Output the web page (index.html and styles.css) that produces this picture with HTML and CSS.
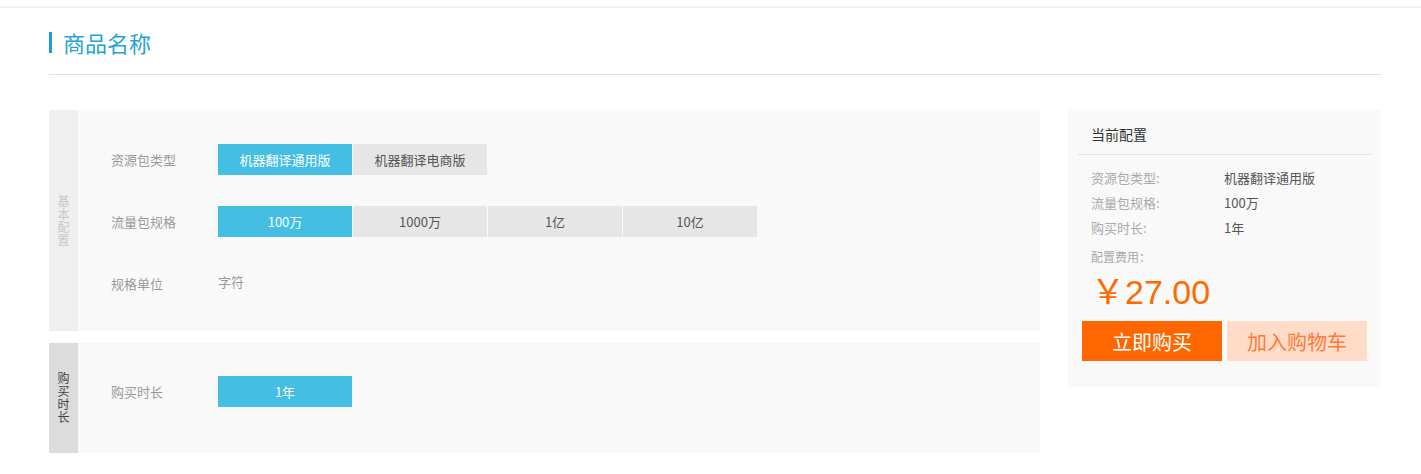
FILE: index.html
```html
<!DOCTYPE html>
<html lang="zh-CN">
<head>
    <meta charset="UTF-8">
    <title>商品名称</title>
    <link rel="stylesheet" href="styles.css">
</head>
<body>
  <div class="topbar"></div>

  <div class="page">
    <div class="title"><span class="title-bar"></span>商品名称</div>

    <div class="content">
      <div class="left">

        <div class="panel">
          <div class="side">基本配置</div>
          <div class="panel-body">
            <div class="row">
              <span class="row-label">资源包类型</span>
              <div class="opts">
                <span class="opt active">机器翻译通用版</span>
                <span class="opt">机器翻译电商版</span>
              </div>
            </div>
            <div class="row">
              <span class="row-label">流量包规格</span>
              <div class="opts">
                <span class="opt active">100万</span>
                <span class="opt">1000万</span>
                <span class="opt">1亿</span>
                <span class="opt">10亿</span>
              </div>
            </div>
            <div class="row">
              <span class="row-label">规格单位</span>
              <span class="row-text">字符</span>
            </div>
          </div>
        </div>

        <div class="panel panel-buy">
          <div class="side side-dark">购买时长</div>
          <div class="panel-body">
            <div class="row">
              <span class="row-label">购买时长</span>
              <div class="opts">
                <span class="opt active">1年</span>
              </div>
            </div>
          </div>
        </div>

      </div>

      <div class="summary">
        <div class="summary-title">当前配置</div>
        <div class="summary-list">
          <div class="summary-row"><span class="s-label">资源包类型:</span><span class="s-value">机器翻译通用版</span></div>
          <div class="summary-row"><span class="s-label">流量包规格:</span><span class="s-value">100万</span></div>
          <div class="summary-row"><span class="s-label">购买时长:</span><span class="s-value">1年</span></div>
        </div>
        <div class="fee-label">配置费用：</div>
        <div class="price">￥27.00</div>
        <div class="actions">
          <button class="btn-buy">立即购买</button>
          <button class="btn-cart">加入购物车</button>
        </div>
      </div>
    </div>
  </div>
</body>
</html>
```

FILE: styles.css
```css
body{
  margin: 0;
  font-family: "Noto Sans CJK SC", "Liberation Sans", sans-serif;
  background: #fff;
  color: #555;
}

.topbar{
  height: 6px;
  border-bottom: 2px solid #f1f1f1;
}

.page{
  padding: 0 40px 0 49px;
}

/* header */
.title{
  display: flex;
  align-items: center;
  height: 67px;
  padding-top: 2px;
  box-sizing: border-box;
  border-bottom: 1px solid #e3e3e3;
  font-size: 22px;
  color: #23a3d4;
}

.title-bar{
  width: 3px;
  height: 21px;
  background: #1a9fd0;
  margin-right: 11px;
}

.content{
  display: flex;
  align-items: flex-start;
  gap: 28px;
  margin-top: 35px;
}

.left{
  flex: 1;
  display: flex;
  flex-direction: column;
  gap: 12px;
}

/* option panels */
.panel{
  display: flex;
  background: #f9f9f9;
}

.side{
  width: 29px;
  flex: none;
  background: #efefef;
  color: #c8c8c8;
  font-size: 12px;
  writing-mode: vertical-rl;
  text-align: center;
  line-height: 29px;
  letter-spacing: 1px;
}

.side-dark{
  background: #dcdcdc;
  color: #444;
}

.panel-body{
  flex: 1;
  padding: 34px 0 33px 33px;
  display: flex;
  flex-direction: column;
  gap: 32px;
}

.panel-buy .panel-body{
  padding: 33px 0 47px 33px;
}

.row{
  display: flex;
  align-items: center;
  height: 30px;
  font-size: 13px;
}

.row-label{
  width: 107px;
  color: #999;
}

.row-text{
  color: #999;
  margin-top: -3px;
}

.opts{
  display: flex;
  gap: 1px;
}

.opt{
  width: 134px;
  height: 31px;
  line-height: 31px;
  text-align: center;
  background: #e6e6e6;
  color: #555;
}

.opt.active{
  background: #44bfe3;
  color: #fff;
}

/* right summary */
.summary{
  width: 313px;
  flex: none;
  background: #f9f9f9;
  padding: 12px 10px 26px;
  box-sizing: border-box;
}

.summary-title{
  font-size: 14px;
  color: #333;
  padding: 0 13px;
  height: 32px;
  line-height: 24px;
  border-bottom: 1px solid #e2e2e2;
}

.summary-list{
  padding: 10px 13px 0;
}

.summary-row{
  display: flex;
  font-size: 13px;
  line-height: 25px;
}

.s-label{
  width: 133px;
  color: #aaa;
}

.s-value{
  color: #555;
}

.fee-label{
  padding: 7px 13px 0;
  font-size: 12px;
  color: #aaa;
  line-height: 20px;
}

.price{
  margin-top: 2px;
  padding: 0 13px;
  font-size: 34px;
  color: #ff6a00;
  line-height: 46px;
  font-family: "Liberation Sans", "Noto Sans CJK SC", sans-serif;
}

.actions{
  display: flex;
  gap: 5px;
  padding: 0 4px;
  margin-top: 6px;
}

.actions button{
  width: 140px;
  height: 40px;
  border: 0;
  font-family: inherit;
  font-size: 20px;
  cursor: pointer;
}

.btn-buy{
  background: #ff6600;
  color: #fff;
}

.btn-cart{
  background: #ffdcc8;
  color: #ff7a3a;
}
```
